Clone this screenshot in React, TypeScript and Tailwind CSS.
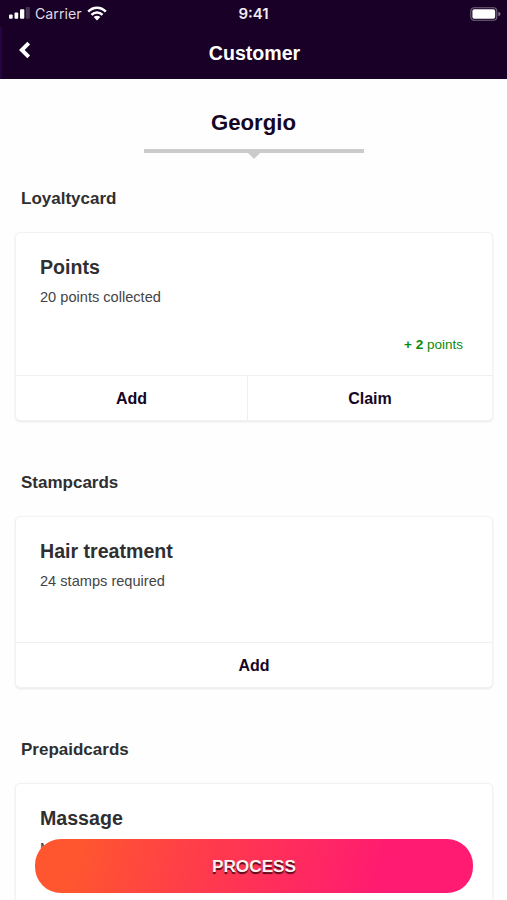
import React from 'react';

export default function App() {
  return (
    <div className="relative flex h-[900px] w-full flex-col overflow-hidden bg-[#fefefe] font-['Liberation_Sans',Arial,sans-serif] text-[#2f2f31]">
      {/* Header */}
      <header className="h-[79px] shrink-0 bg-[#190026] text-white">
        <StatusBar />
        <div className="relative flex h-[52px] items-center justify-center border-l-2 border-[#260341] pt-[2px]">
          <button className="absolute top-[14px] left-[16px]" aria-label="Back">
            <svg width="14" height="18" viewBox="0 0 14 18" fill="none" stroke="white" strokeWidth="3.9">
              <path d="M10.7 2.2 L3.8 9 L10.7 15.8" />
            </svg>
          </button>
          <h1 className="text-[19.6px] leading-none font-bold">Customer</h1>
        </div>
      </header>

      {/* Customer name */}
      <section className="flex h-[94px] shrink-0 flex-col items-center pt-[31px]">
        <h2 className="h-[39px] text-[22.2px] leading-[25px] font-bold text-[#150625]">Georgio</h2>
        <div className="h-1 w-[220px] bg-[#cbcbcb]" />
        <svg width="12" height="6" viewBox="0 0 12 6">
          <path d="M0 0H12L6 6Z" fill="#cbcbcb" />
        </svg>
      </section>

      <Section title="Loyaltycard">
        <Card title="Points" subtitle="20 points collected" bodyClass="h-[142px]" actions={['Add', 'Claim']}>
          <p className="absolute right-[29px] bottom-[22px] text-[13.5px] leading-4 text-[#0b8a0b]">
            <b>+ 2</b> points
          </p>
        </Card>
      </Section>

      <Section title="Stampcards">
        <Card title="Hair treatment" subtitle="24 stamps required" bodyClass="h-[125px]" actions={['Add']} />
      </Section>

      <Section title="Prepaidcards">
        <Card title="Massage" subtitle="Massage" bodyClass="h-[142px]" actions={[]} />
      </Section>

      <button className="absolute bottom-[7px] left-[35px] h-[54px] w-[438px] rounded-[26px] bg-[linear-gradient(105deg,#ff562f_10%,#ff3a4d_40%,#ff1a72_80%)] pt-px text-[17.2px] font-bold text-[#fff0f0] [text-shadow:0_1.5px_1px_rgba(40,0,10,0.8)]">
        PROCESS
      </button>
    </div>
  );
}

function StatusBar() {
  return (
    <div className="grid h-[27px] grid-cols-3 items-center pr-[6px] pl-[9px] font-[Inter,sans-serif]">
      <div className="flex items-center">
        <svg width="21" height="12" viewBox="0 0 21 12" fill="white">
          <rect x="0" y="7.6" width="3.7" height="4.2" rx="1" />
          <rect x="5.5" y="5.6" width="3.7" height="6.2" rx="1" />
          <rect x="11" y="2.2" width="4.3" height="9.6" rx="1" />
          <rect x="16.8" y="0" width="4" height="11.8" rx="1" opacity=".2" />
        </svg>
        <span className="ml-[5px] w-[48px] pt-px text-[14.2px] leading-none text-[#dfdae3]">Carrier</span>
        <svg className="ml-1" width="20" height="15" viewBox="0 0 20 15" fill="none" stroke="white" strokeWidth="2.5">
          <path d="M1.2 5.6C6.2 .3 13.8 .3 18.8 5.6" />
          <path d="M4.5 8.9C7.6 5.7 12.4 5.7 15.5 8.9" />
          <path d="M6.7 11.1C8.6 9.3 11.4 9.3 13.3 11.1L10 14.5Z" fill="white" stroke="none" />
        </svg>
      </div>
      <span className="-mr-[3px] -ml-[6px] text-center text-[15px] leading-none font-semibold text-[#f0edf2]">9:41</span>
      <svg className="justify-self-end" width="31" height="14" viewBox="0 0 31 14">
        <rect x=".8" y=".7" width="26" height="12.6" rx="3.5" fill="none" stroke="#77677f" strokeWidth="1.1" />
        <rect x="2.4" y="2.2" width="22.8" height="9.6" rx="1.8" fill="white" />
        <path d="M28.4 4.8Q30.5 5.5 30.5 7T28.4 9.2Z" fill="#8b7c92" />
      </svg>
    </div>
  );
}

function Section({ title, children }: { title: string; children: React.ReactNode }) {
  return (
    <section className="mb-[36px] shrink-0">
      <h3 className="h-[59px] pt-4 pl-[21px] text-[17px] leading-5 font-bold">{title}</h3>
      {children}
    </section>
  );
}

type CardProps = {
  title: string;
  subtitle: string;
  bodyClass: string;
  actions: string[];
  children?: React.ReactNode;
};

function Card({ title, subtitle, bodyClass, actions, children }: CardProps) {
  return (
    <div className="mr-[14px] ml-[15px] rounded-[5px] border border-[#f2f2f2] bg-white shadow-[0_1px_2px_rgba(0,0,0,0.09)]">
      <div className={`relative pt-[22px] pl-[24px] ${bodyClass}`}>
        <h4 className="text-[19.6px] leading-6 font-bold">{title}</h4>
        <p className="mt-[10px] text-[14.6px] leading-4 text-[#444446]">{subtitle}</p>
        {children}
      </div>
      {actions.length > 0 && (
        <div className="flex border-t border-[#efefef] text-base font-bold text-[#150625]">
          {actions.map((action, i) => (
            <button
              key={action}
              className={i > 0 ? 'h-[44px] flex-1 border-l border-[#efefef] pt-0.5' : actions.length > 1 ? 'h-[44px] w-[231px] pt-0.5' : 'h-[44px] flex-1 pt-0.5'}
            >
              {action}
            </button>
          ))}
        </div>
      )}
    </div>
  );
}
